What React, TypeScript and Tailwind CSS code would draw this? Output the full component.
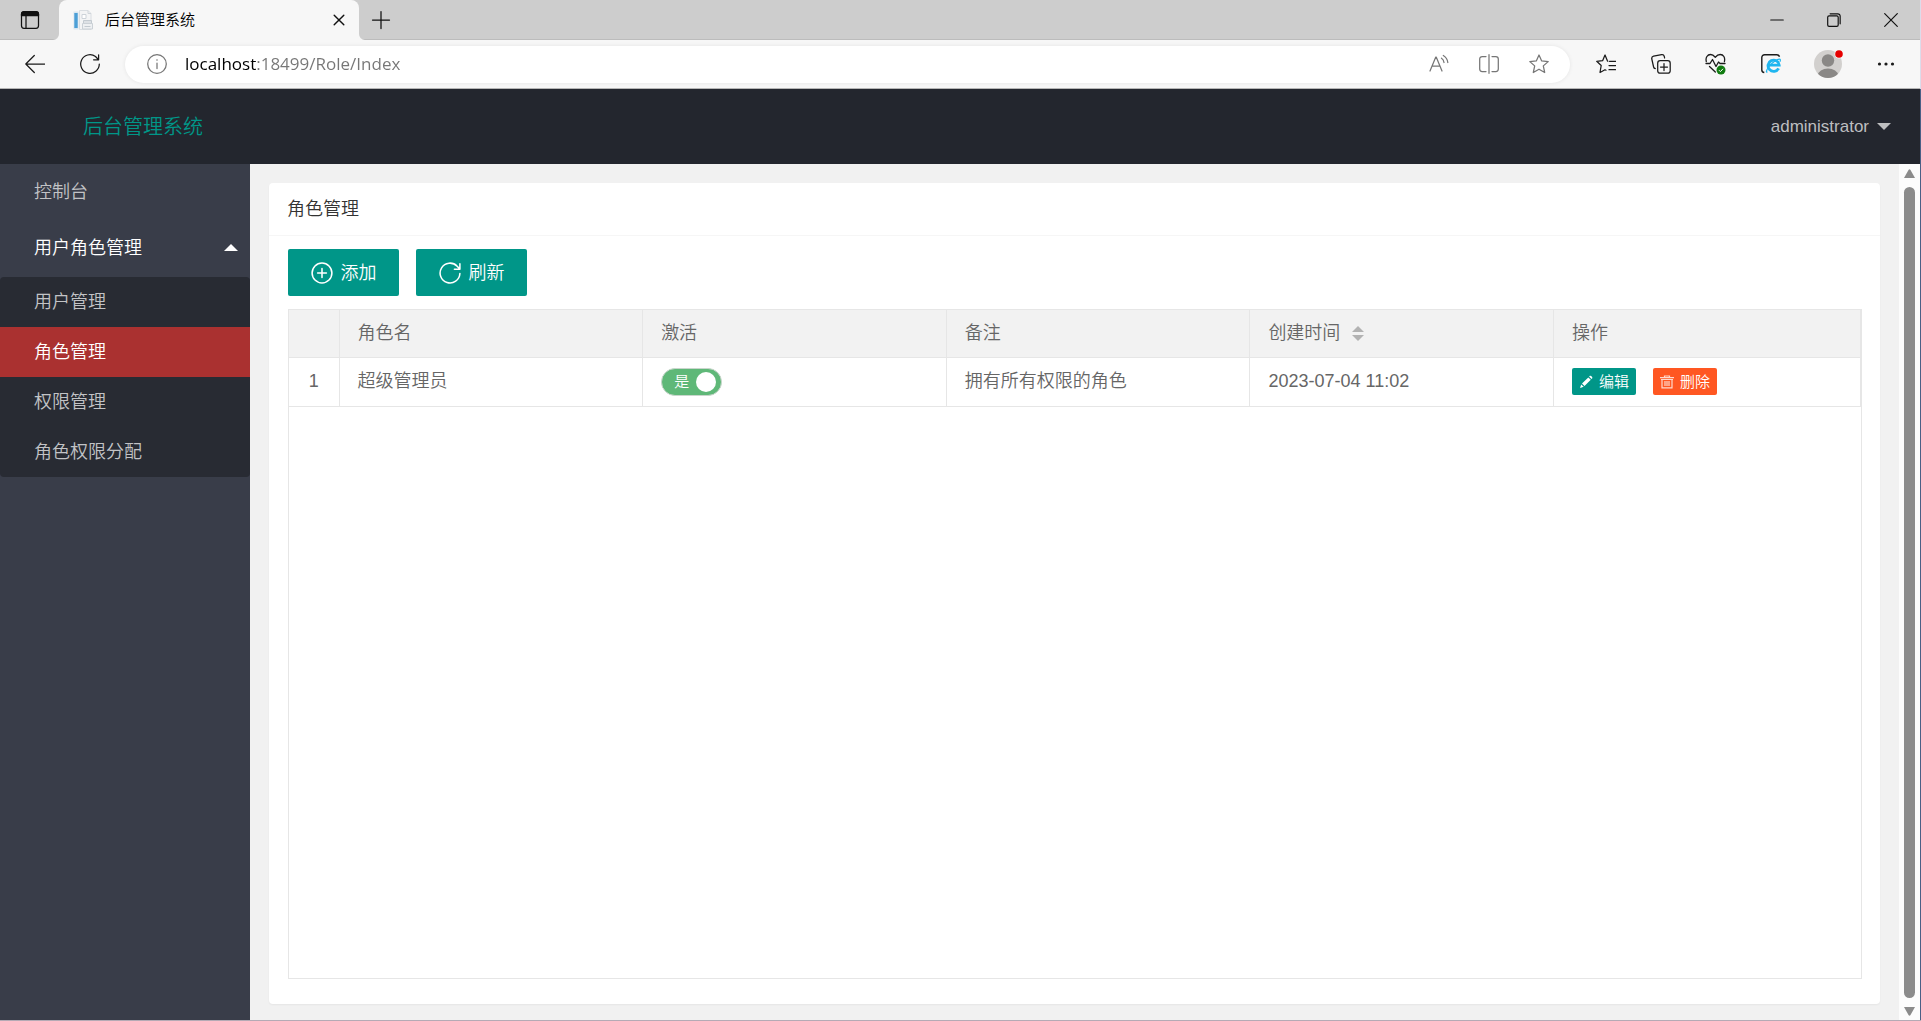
import React, { useState } from 'react';

interface Role {
  id: number;
  name: string;
  active: boolean;
  remark: string;
  createdAt: string;
}

const ROLES: Role[] = [
  {
    id: 1,
    name: '超级管理员',
    active: true,
    remark: '拥有所有权限的角色',
    createdAt: '2023-07-04 11:02',
  },
];

const SUB_MENU = ['用户管理', '角色管理', '权限管理', '角色权限分配'];

function Icon({
  size = 20,
  stroke = 1.25,
  children,
}: {
  size?: number;
  stroke?: number;
  children: React.ReactNode;
}) {
  return (
    <svg
      width={size}
      height={size}
      viewBox="0 0 20 20"
      fill="none"
      stroke="currentColor"
      strokeWidth={stroke}
      strokeLinecap="round"
      strokeLinejoin="round"
      className="shrink-0"
      aria-hidden="true"
    >
      {children}
    </svg>
  );
}

function BarButton({
  label,
  className,
  children,
}: {
  label: string;
  className: string;
  children: React.ReactNode;
}) {
  return (
    <button
      type="button"
      aria-label={label}
      className={`flex h-full shrink-0 items-center justify-center ${className}`}
    >
      {children}
    </button>
  );
}

function Favicon() {
  return (
    <svg width="20" height="20" viewBox="0 0 20 20" className="shrink-0" aria-hidden="true">
      <rect x="0.5" y="1.5" width="5" height="18" fill="#d9e6f0" />
      <rect x="1.3" y="3" width="3.4" height="15" fill="#4c9fd6" />
      <path d="M6.500.5h8.500l3 3v16h-11.500z" fill="#f3f4f5" stroke="#dadee2" />
      <path d="M15 .5v3h3" fill="none" stroke="#cfd5da" />
      <path d="M9 4.500h4v4h-4z" fill="#fff" stroke="#cdd3d9" />
      <path d="M10.500 10.500h8v3h-8z" fill="#dde1e5" stroke="#c3cad0" />
      <path d="M9.500 13.500h10v5.500h-10z" fill="#eef0f2" stroke="#cbd1d6" />
      <path d="M11.500 16.500h6" stroke="#c3cad0" />
    </svg>
  );
}

function TabStrip() {
  return (
    <div className="flex h-10 bg-[#cdcdcd] text-[#111] shadow-[inset_0_-1px_0_#bcbcbc]">
      <BarButton label="Workspaces" className="w-[59px]">
        <Icon>
          <rect x="1.500" y="1.800" width="17" height="16.500" rx="2.500" />
          <path d="M1.500 5.500V4a2.500 2.500 0 0 1 2.500-2.500h12a2.500 2.500 0 0 1 2.500 2.500v1.500z" fill="currentColor" />
          <path d="M6 6v12" />
        </Icon>
      </BarButton>
      <div className="relative flex w-[300px] items-center rounded-t-lg bg-[#f7f7f7] pl-3.5 pr-2.5">
        <svg width="6" height="6" className="absolute bottom-0 -left-1.5" aria-hidden="true">
          <path d="M6 0v6H0A6 6 0 0 0 6 0z" fill="#f7f7f7" />
        </svg>
        <svg width="6" height="6" className="absolute bottom-0 -right-1.5" aria-hidden="true">
          <path d="M0 0v6h6A6 6 0 0 1 0 0z" fill="#f7f7f7" />
        </svg>
        <Favicon />
        <span className="ml-3 flex-1 text-[15px] text-black">后台管理系统</span>
        <BarButton label="Close tab" className="w-5">
          <Icon size={12} stroke={2.4}>
            <path d="M2 2l16 16M18 2L2 18" />
          </Icon>
        </BarButton>
      </div>
      <BarButton label="New tab" className="w-[43px]">
        <Icon>
          <path d="M10 1.500v17M1.500 10h17" />
        </Icon>
      </BarButton>
      <div className="flex-1" />
      <BarButton label="Minimize" className="w-[57px]">
        <Icon size={14} stroke={1.5}>
          <path d="M1 10h18" />
        </Icon>
      </BarButton>
      <BarButton label="Restore" className="w-[57px]">
        <Icon size={14} stroke={1.7}>
          <rect x="1" y="4" width="15" height="15" rx="2" />
          <path d="M4.500 1.200H15.500a3.300 3.300 0 0 1 3.300 3.300V15.500" />
        </Icon>
      </BarButton>
      <BarButton label="Close" className="w-[58px]">
        <Icon size={14} stroke={1.7}>
          <path d="M1 1l18 18M19 1L1 19" />
        </Icon>
      </BarButton>
    </div>
  );
}

function AddressBar() {
  return (
    <div className="flex h-[37px] min-w-0 flex-1 items-center rounded-full bg-white pl-[22px] pr-1.5 text-[#767676] shadow-[0_0_4px_rgba(0,0,0,0.08)]">
      <Icon>
        <circle cx="10" cy="10" r="9.300" />
        <path d="M10 9v5.500" />
        <circle cx="10" cy="6" r="0.800" fill="currentColor" stroke="none" />
      </Icon>
      <input
        type="text"
        aria-label="Address"
        defaultValue="localhost:18499/Role/Index"
        className="ml-[18px] min-w-0 flex-1 bg-[linear-gradient(to_right,#000_72px,#767676_72px)] bg-clip-text font-['Open_Sans','Noto_Sans',sans-serif] text-[17px] font-normal text-transparent outline-none"
      />
      <BarButton label="Read aloud" className="w-[50px]">
        <Icon>
          <path d="M1 17L6.800 3h.4L13 17M3.200 12h7.600" />
          <path d="M12.500 4.200c1.500 1 2.300 2.500 2.500 4.300M14.300 1.500c2.600 1.600 4.200 4 4.500 7" />
        </Icon>
      </BarButton>
      <BarButton label="Split screen" className="w-[50px]">
        <Icon>
          <path d="M7 2.500H3.200a2.500 2.500 0 0 0-2.500 2.500v10a2.500 2.500 0 0 0 2.500 2.500H7M13 2.500h3.800a2.500 2.500 0 0 1 2.500 2.500v10a2.500 2.500 0 0 1-2.500 2.500H13M10 .7v18.600" />
        </Icon>
      </BarButton>
      <BarButton label="Add to favorites" className="w-[50px]">
        <Icon>
          <path d="M10 1l2.700 5.900 6.500.7-4.900 4.300 1.400 6.600L10 15.200l-5.700 3.300 1.400-6.600L.8 7.600l6.500-.7z" />
        </Icon>
      </BarButton>
    </div>
  );
}

function BrowserToolbar() {
  return (
    <div className="flex h-[49px] items-center border-b border-b-[#b5b5b5] bg-[#f7f7f7] px-[7px] text-[#1b1b1b]">
      <BarButton label="Back" className="w-[55px]">
        <Icon>
          <path d="M19.500 10H.8M9.300 1.500L.8 10l8.500 8.500" />
        </Icon>
      </BarButton>
      <BarButton label="Refresh" className="mr-2 w-[55px]">
        <Icon>
          <path d="M19.300 10A9.300 9.300 0 1 1 15.500 2.500L18.300 5.500M18.600.8v5h-5" />
        </Icon>
      </BarButton>
      <AddressBar />
      <BarButton label="Favorites" className="ml-2 w-[55px]">
        <Icon>
          <path d="M11.800 7.200h-.2L9 1 6.600 6.700l-5.900.6 4.500 4.200L4 18.500l5-2.800 1 .5M13.500 7.300h6M13 11.500h6.500M13 15.700h6.500" />
        </Icon>
      </BarButton>
      <BarButton label="Collections" className="w-[55px]">
        <Icon>
          <rect x="6.700" y="6.700" width="12.500" height="12.500" rx="2.500" />
          <path d="M13 9.500v7M9.500 13h7M4.300 14.700a2.300 2.300 0 0 1-1.700-1.700L.8 5a2.400 2.400 0 0 1 1.800-2.800l8-1.500a2.400 2.400 0 0 1 2.700 1.800l.3 1.500" />
        </Icon>
      </BarButton>
      <BarButton label="Browser essentials" className="w-[55px]">
        <svg width="21" height="22" viewBox="0 0 21 22" fill="none" aria-hidden="true">
          <path
            d="M1.300 8.500C.3 4.500 2.500 1.500 5.500 1.500c2 0 3.300 1 4.800 2.700C11.800 2.500 13.200 1.500 15.200 1.500c3.200 0 5.200 3 4.200 7M1 10.500h4l2.500-4 3.500 7 2.500-4.500 1.500 1.500h5M4.500 13.500l5.800 5.500"
            stroke="#1b1b1b"
            strokeWidth="1.300"
            strokeLinecap="round"
            strokeLinejoin="round"
          />
          <circle cx="16" cy="17" r="4.500" fill="#107c10" />
          <path d="M14 17.200l1.400 1.400 2.600-2.800" stroke="#fff" strokeWidth="1" />
        </svg>
      </BarButton>
      <BarButton label="Internet Explorer mode" className="w-[55px]">
        <svg width="20" height="20" viewBox="0 0 20 20" fill="none" aria-hidden="true">
          <path
            d="M3.300 18.500A2.800 2.800 0 0 1 .8 15.500V3.500A2.800 2.800 0 0 1 3.600.7h12.300a2.800 2.800 0 0 1 2.600 2"
            stroke="#1b1b1b"
            strokeWidth="1.400"
          />
          <path d="M17.600 14.300a5.600 5.600 0 1 1 .6-3.100H8.500" stroke="#1fb6f0" strokeWidth="2.800" />
          <path
            d="M6.500 17.800c-1.800 1.400-1.500-1.500 1.500-5.300 3-4 8.500-7.800 10.700-7.400.9.200.8 1.400.2 2.700"
            stroke="#1fb6f0"
            strokeWidth="1.200"
          />
        </svg>
      </BarButton>
      <BarButton label="Profile" className="w-[60px]">
        <svg width="30" height="30" viewBox="0 0 30 30" aria-hidden="true">
          <clipPath id="avatar">
            <circle cx="15" cy="15" r="14" />
          </clipPath>
          <circle cx="15" cy="15" r="14" fill="#d2d0ce" />
          <circle cx="15" cy="11.500" r="6.200" fill="#8a8886" />
          <ellipse cx="15" cy="26" rx="10" ry="6.500" fill="#8a8886" clipPath="url(#avatar)" />
          <circle cx="26" cy="5" r="4.500" fill="#f7f7f7" />
          <circle cx="26" cy="5" r="3.800" fill="#e60000" />
        </svg>
      </BarButton>
      <BarButton label="Settings and more" className="w-[55px]">
        <svg width="18" height="4" viewBox="0 0 18 4" fill="#1b1b1b" aria-hidden="true">
          <circle cx="2.500" cy="2" r="1.600" />
          <circle cx="9" cy="2" r="1.600" />
          <circle cx="15.500" cy="2" r="1.600" />
        </svg>
      </BarButton>
    </div>
  );
}

function Caret({ up = false }: { up?: boolean }) {
  return (
    <svg width="14" height="7" viewBox="0 0 14 7" fill="currentColor" aria-hidden="true">
      <path d={up ? 'M0 7L7 0l7 7z' : 'M0 0h14L7 7z'} />
    </svg>
  );
}

function Header() {
  return (
    <header className="flex h-[75px] shrink-0 items-center justify-between bg-[#23262e] pr-[29px]">
      <h1 className="w-[250px] pl-[83px] text-xl text-[#009688]">后台管理系统</h1>
      <button type="button" className="flex items-center gap-2 text-[17px] text-[#bdbec0]">
        administrator
        <Caret />
      </button>
    </header>
  );
}

function Sidebar() {
  const [current, setCurrent] = useState('角色管理');

  return (
    <nav className="w-[250px] shrink-0 bg-[#393d49] text-lg text-[#c2c3c6]">
      <a href="#console" className="flex h-14 items-center pl-[34px]">
        控制台
      </a>
      <a href="#roles" className="flex h-[57px] items-center justify-between pb-0.5 pl-[34px] pr-3 text-white">
        用户角色管理
        <Caret up />
      </a>
      <ul className="rounded-sm bg-[#282b33]">
        {SUB_MENU.map((item) => (
          <li key={item}>
            <a
              href="#roles"
              onClick={() => setCurrent(item)}
              className={`flex h-[50px] items-center pl-[34px] ${
                item === current ? 'bg-[#aa3130] text-white' : ''
              }`}
            >
              {item}
            </a>
          </li>
        ))}
      </ul>
    </nav>
  );
}

function ActiveSwitch({ defaultChecked }: { defaultChecked: boolean }) {
  const [checked, setChecked] = useState(defaultChecked);

  return (
    <label
      className={`flex h-7 w-[61px] cursor-pointer items-center justify-between rounded-full border pl-3 pr-[5px] text-[15px] text-white ${
        checked ? 'border-[#c9d6cc] bg-[#5fb878]' : 'flex-row-reverse border-[#d2d2d2] bg-[#d2d2d2]'
      }`}
    >
      <input
        type="checkbox"
        className="sr-only"
        checked={checked}
        onChange={(e) => setChecked(e.target.checked)}
      />
      <span className="leading-5">{checked ? '是' : '否'}</span>
      <span className="size-5 rounded-full bg-white" />
    </label>
  );
}

function RoleTable() {
  return (
    <table className="w-full table-fixed border-collapse text-left text-lg text-[#666]">
      <colgroup>
        <col className="w-[50px]" />
        <col />
        <col />
        <col />
        <col />
        <col className="w-[307px]" />
      </colgroup>
      <thead>
        <tr className="h-[47px] border-b border-[#e6e6e6] bg-[#f2f2f2] [&>th]:border-r [&>th]:border-[#e6e6e6] [&>th]:px-[18px] [&>th]:font-[350]">
          <th aria-label="序号" />
          <th>角色名</th>
          <th>激活</th>
          <th>备注</th>
          <th>
            <span className="flex items-center gap-3">
              创建时间
              <button type="button" aria-label="排序" className="flex flex-col gap-[3px] text-[#b2b2b2]">
                <svg width="12" height="6" fill="currentColor" aria-hidden="true">
                  <path d="M0 6l6-6 6 6z" />
                </svg>
                <svg width="12" height="6" fill="currentColor" aria-hidden="true">
                  <path d="M0 0h12L6 6z" />
                </svg>
              </button>
            </span>
          </th>
          <th>操作</th>
        </tr>
      </thead>
      <tbody>
        {ROLES.map((role) => (
          <tr
            key={role.id}
            className="h-[49px] border-b border-[#e6e6e6] [&>td]:border-r [&>td]:border-[#e6e6e6] [&>td]:px-[18px]"
          >
            <td className="pb-0.5 text-center">{role.id}</td>
            <td className="pb-0.5">{role.name}</td>
            <td>
              <ActiveSwitch defaultChecked={role.active} />
            </td>
            <td className="pb-0.5">{role.remark}</td>
            <td className="pb-0.5">{role.createdAt}</td>
            <td>
              <div className="flex gap-[17px] text-[15px] text-white">
                <button
                  type="button"
                  className="flex h-[27px] w-16 items-center justify-center gap-1.5 rounded-xs bg-[#009688]"
                >
                  <svg width="14" height="14" viewBox="0 0 14 14" fill="currentColor" aria-hidden="true">
                    <path d="M1 13l1.200-3.600 2.500 2.400zM3 8.600L9.300 2.400l2.500 2.400-6.300 6.300zM10.100 1.600l.8-.8c.9-.7 3 1.400 2.400 2.400l-.8.800z" />
                  </svg>
                  编辑
                </button>
                <button
                  type="button"
                  className="flex h-[27px] w-16 items-center justify-center gap-1.5 rounded-xs bg-[#ff5722]"
                >
                  <svg
                    width="14"
                    height="14"
                    viewBox="0 0 14 14"
                    fill="none"
                    stroke="#ffd9cc"
                    strokeWidth="1.200"
                    aria-hidden="true"
                  >
                    <path d="M0 2.700h14M4.500 2.500V1h5v1.500M2 5v7.800h10V5M1 4.500h12M5 6v5M7 6v5M9 6v5" />
                  </svg>
                  删除
                </button>
              </div>
            </td>
          </tr>
        ))}
      </tbody>
    </table>
  );
}

function RoleCard() {
  return (
    <section className="flex min-w-0 flex-1 flex-col rounded-sm bg-white shadow-[0_1px_2px_rgba(0,0,0,0.05)]">
      <h2 className="flex h-[53px] shrink-0 items-center border-b border-[#f6f6f6] px-[18px] text-lg text-[#333]">
        角色管理
      </h2>
      <div className="flex flex-1 flex-col pb-[25px] pl-[19px] pr-[18px] pt-[13px]">
        <div className="mb-[13px] flex gap-[17px] text-lg text-white">
          <button
            type="button"
            className="flex h-[47px] w-[111px] items-center justify-center gap-2 rounded-xs bg-[#009688]"
          >
            <Icon size={22} stroke={1.4}>
              <circle cx="10" cy="10" r="9" />
              <path d="M10 6v8M6 10h8" />
            </Icon>
            添加
          </button>
          <button
            type="button"
            className="flex h-[47px] w-[111px] items-center justify-center gap-2 rounded-xs bg-[#009688]"
          >
            <Icon size={22} stroke={1.4}>
              <path d="M19 10.500A9 9 0 1 1 16.500 3.800L18.500 6M19 1.500v5h-5" />
            </Icon>
            刷新
          </button>
        </div>
        <div className="flex-1 border border-[#e6e6e6]">
          <RoleTable />
        </div>
      </div>
    </section>
  );
}

function ScrollBar() {
  return (
    <div
      className="flex w-[21px] shrink-0 flex-col items-center gap-[9px] bg-[#fcfcfc] pb-1 pt-[5px] text-[#8b8b8b]"
      aria-hidden="true"
    >
      <svg width="11" height="9" fill="currentColor">
        <path d="M0 9l4.500-8q1-1.500 2 0L11 9z" />
      </svg>
      <div className="w-[11px] flex-1 rounded-full bg-[#8b8b8b]" />
      <svg width="11" height="9" fill="currentColor">
        <path d="M0 0h11L6.500 8q-1 1.500-2 0z" />
      </svg>
    </div>
  );
}

export default function App() {
  return (
    <div className="flex min-h-screen flex-col border-b border-[#b5aab5] font-['Liberation_Sans','Noto_Sans_CJK_SC',sans-serif] font-[350]">
      <div className="shrink-0 border-r border-[#dcdcea]">
        <TabStrip />
        <BrowserToolbar />
      </div>
      <div className="flex flex-1 flex-col border-r border-[#4a6086]">
        <Header />
        <div className="flex flex-1">
          <Sidebar />
          <main className="flex min-w-0 flex-1 bg-[#f1f1f1] px-[19px] pb-4 pt-[19px]">
            <RoleCard />
          </main>
          <ScrollBar />
        </div>
      </div>
    </div>
  );
}
